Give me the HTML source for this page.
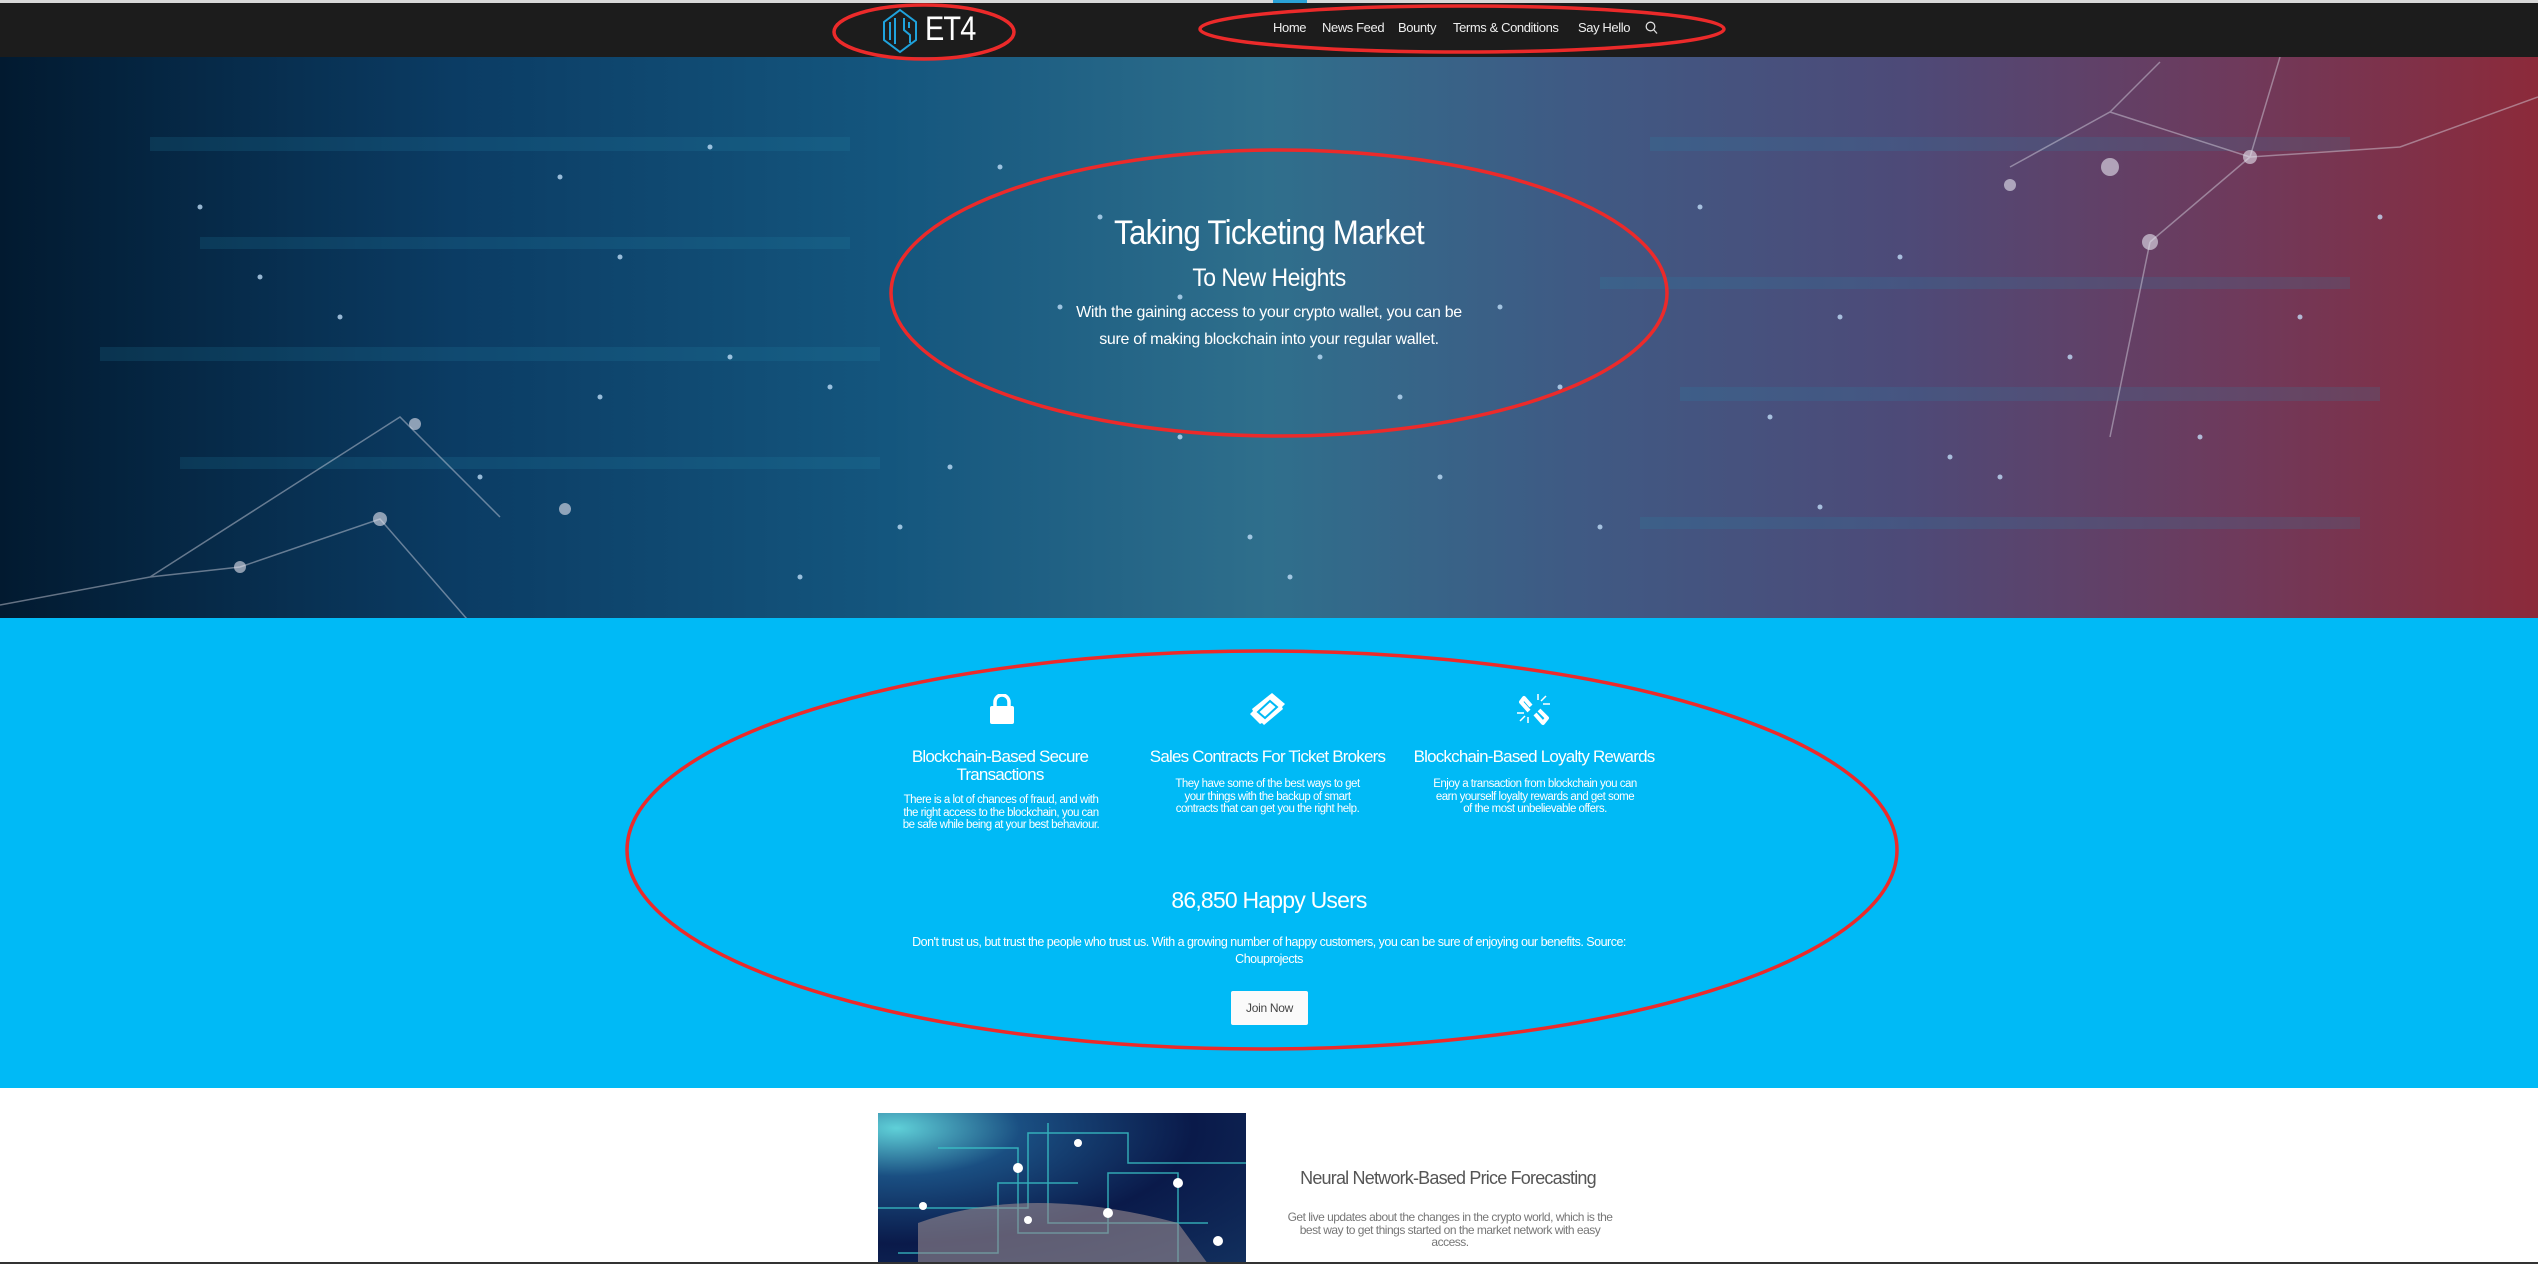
<!DOCTYPE html>
<html><head><meta charset="utf-8"><style>
*{margin:0;padding:0;box-sizing:border-box}
body{width:2538px;height:1264px;overflow:hidden;background:#fff;font-family:"Liberation Sans",sans-serif;position:relative}
.a{position:absolute}
.c{text-align:center}
#nav{left:0;top:0;width:2538px;height:57px;background:#1c1c1c;border-top:3px solid #d8d8d8}
.ni{top:20px;color:#eee;font-size:13px;letter-spacing:-0.4px}
#hero{left:0;top:57px;width:2538px;height:561px;background:linear-gradient(90deg,#021a30 0%,#0b3c64 18%,#14567e 35%,#2f6f8c 50%,#3f5a84 62%,#4d4a78 75%,#6e3a5c 88%,#8c2a3a 100%)}
#blue{left:0;top:618px;width:2538px;height:470px;background:#00baf6}
.t{color:#fff;font-size:17px;letter-spacing:-0.8px;line-height:18px}
.d{color:#fff;font-size:11.5px;line-height:12.5px;letter-spacing:-0.5px;white-space:nowrap}
</style></head><body>
<div id="nav" class="a"></div>
<div class="a" style="left:1273px;top:0;width:34px;height:3px;background:#2aa3d8"></div>
<svg class="a" style="left:880px;top:8px" width="40" height="46" viewBox="0 0 40 46"><path d="M20 2 L36 14 L36 32 L20 44 L4 32 L4 14 Z" fill="none" stroke="#1fa2dc" stroke-width="2"/><path d="M10 14v18M15 10v26M24 10v12l6 5v8M29 14v6" fill="none" stroke="#1fa2dc" stroke-width="2"/></svg>
<div class="a" style="left:925px;top:10px;color:#fff;font-size:34px;letter-spacing:-1px;transform:scaleX(.85);transform-origin:left">ET4</div>
<div class="a ni" style="left:1273px">Home</div>
<div class="a ni" style="left:1322px">News Feed</div>
<div class="a ni" style="left:1398px">Bounty</div>
<div class="a ni" style="left:1453px">Terms &amp; Conditions</div>
<div class="a ni" style="left:1578px">Say Hello</div>
<svg class="a" style="left:1645px;top:21px" width="13" height="14"><circle cx="5.5" cy="5.5" r="4.3" fill="none" stroke="#ddd" stroke-width="1.3"/><path d="M8.5 8.5L12 12.5" stroke="#ddd" stroke-width="1.3"/></svg>

<div id="hero" class="a">
<svg width="2538" height="561" style="position:absolute;left:0;top:0">
<g fill="rgba(40,140,170,.18)">
<rect x="150" y="80" width="700" height="14"/><rect x="200" y="180" width="650" height="12"/><rect x="100" y="290" width="780" height="14"/><rect x="180" y="400" width="700" height="12"/><rect x="1650" y="80" width="700" height="14"/><rect x="1600" y="220" width="750" height="12"/><rect x="1680" y="330" width="700" height="14"/><rect x="1640" y="460" width="720" height="12"/></g>
<g stroke="rgba(220,220,230,.45)" stroke-width="1.5" fill="none">
<path d="M0 548 L150 520 L240 510 L380 462 L500 600 M150 520 L400 360 L500 460 M2010 110 L2110 55 L2250 100 L2400 90 L2538 40 M2110 55 L2160 5 M2250 100 L2280 0 M2150 185 L2110 380 M2250 100 L2150 185"/></g>
<g fill="rgba(230,230,240,.6)"><circle cx="240" cy="510" r="6"/><circle cx="380" cy="462" r="7"/><circle cx="565" cy="452" r="6"/><circle cx="2110" cy="110" r="9"/><circle cx="2250" cy="100" r="7"/><circle cx="2150" cy="185" r="8"/><circle cx="2010" cy="128" r="6"/><circle cx="415" cy="367" r="6"/></g>
<g fill="rgba(200,230,255,.75)">
<circle cx="200" cy="150" r="2.5"/><circle cx="340" cy="260" r="2.5"/><circle cx="620" cy="200" r="2.5"/><circle cx="710" cy="90" r="2.5"/><circle cx="830" cy="330" r="2.5"/><circle cx="1060" cy="250" r="2.5"/><circle cx="1180" cy="380" r="2.5"/><circle cx="1320" cy="300" r="2.5"/><circle cx="1440" cy="420" r="2.5"/><circle cx="1560" cy="330" r="2.5"/><circle cx="1700" cy="150" r="2.5"/><circle cx="1840" cy="260" r="2.5"/><circle cx="1950" cy="400" r="2.5"/><circle cx="2070" cy="300" r="2.5"/><circle cx="2200" cy="380" r="2.5"/><circle cx="480" cy="420" r="2.5"/><circle cx="900" cy="470" r="2.5"/><circle cx="1250" cy="480" r="2.5"/><circle cx="1600" cy="470" r="2.5"/><circle cx="1900" cy="200" r="2.5"/><circle cx="600" cy="340" r="2.5"/><circle cx="1000" cy="110" r="2.5"/>
<circle cx="260" cy="220" r="2.5"/><circle cx="560" cy="120" r="2.5"/><circle cx="730" cy="300" r="2.5"/><circle cx="950" cy="410" r="2.5"/><circle cx="1100" cy="160" r="2.5"/><circle cx="1380" cy="180" r="2.5"/><circle cx="1500" cy="250" r="2.5"/><circle cx="1770" cy="360" r="2.5"/><circle cx="1820" cy="450" r="2.5"/><circle cx="2000" cy="420" r="2.5"/><circle cx="2300" cy="260" r="2.5"/><circle cx="2380" cy="160" r="2.5"/><circle cx="1290" cy="520" r="2.5"/><circle cx="1180" cy="240" r="2.5"/><circle cx="1400" cy="340" r="2.5"/><circle cx="800" cy="520" r="2.5"/>
</g></svg>
</div>
<div class="a c" style="left:969px;top:214px;width:600px;color:#fff;font-size:34px;letter-spacing:-0.8px;transform:scaleX(.92)">Taking Ticketing Market</div>
<div class="a c" style="left:969px;top:264px;width:600px;color:#fff;font-size:25px;letter-spacing:-0.6px;transform:scaleX(.92)">To New Heights</div>
<div class="a c" style="left:969px;top:299px;width:600px;color:#fff;font-size:16px;line-height:27px;letter-spacing:-0.3px">With the gaining access to your crypto wallet, you can be<br>sure of making blockchain into your regular wallet.</div>

<div id="blue" class="a"></div>
<svg class="a" style="left:990px;top:694px" width="24" height="30" viewBox="0 0 24 30"><path d="M5 13V8a7 7 0 0 1 14 0v5" fill="none" stroke="#fff" stroke-width="3.5"/><rect x="0" y="12" width="24" height="18" rx="2" fill="#fff"/></svg>
<svg class="a" style="left:1250px;top:692px" width="36" height="34" viewBox="0 0 36 34"><path d="M22 1 L35 12 L32 15 L33 17 L14 33 L12 31 L10 32 L0 22 L3 19 L2 17 Z" fill="#fff"/><path d="M20 9 L27 15 L15 26 L8 20 Z" fill="none" stroke="#00baf6" stroke-width="2"/></svg>
<svg class="a" style="left:1517px;top:692px" width="36" height="34" viewBox="0 0 36 34" fill="none" stroke="#fff"><path d="M14 14 L7 6 L4 10 L12 19" stroke-width="4" stroke-linejoin="round"/><path d="M22 18 L30 26 L26 31 L18 22" stroke-width="4" stroke-linejoin="round"/><path d="M21 2v6M24 9l5-5M26 12h7M11 31v-6M8 24l-5 5M7 21H0" stroke-width="1.5"/></svg>
<div class="a c t" style="left:880px;top:748px;width:240px">Blockchain-Based Secure<br>Transactions</div>
<div class="a c d" style="left:881px;top:794px;width:240px">There is a lot of chances of fraud, and with<br>the right access to the blockchain, you can<br>be safe while being at your best behaviour.</div>
<div class="a c t" style="left:1140px;top:748px;width:255px">Sales Contracts For Ticket Brokers</div>
<div class="a c d" style="left:1150px;top:778px;width:235px">They have some of the best ways to get<br>your things with the backup of smart<br>contracts that can get you the right help.</div>
<div class="a c t" style="left:1404px;top:748px;width:260px">Blockchain-Based Loyalty Rewards</div>
<div class="a c d" style="left:1410px;top:778px;width:250px">Enjoy a transaction from blockchain you can<br>earn yourself loyalty rewards and get some<br>of the most unbelievable offers.</div>
<div class="a c" style="left:969px;top:887px;width:600px;color:#fff;font-size:23px;letter-spacing:-0.8px">86,850 Happy Users</div>
<div class="a c" style="left:869px;top:934px;width:800px;color:#fff;font-size:12.5px;line-height:17px;letter-spacing:-0.5px">Don't trust us, but trust the people who trust us. With a growing number of happy customers, you can be sure of enjoying our benefits. Source:<br>Chouprojects</div>
<div class="a c" style="left:1231px;top:991px;width:77px;height:34px;background:#fafafa;border-radius:2px;color:#444;font-size:12px;line-height:34px;letter-spacing:-0.3px">Join Now</div>

<div class="a" style="left:878px;top:1113px;width:368px;height:151px;background:radial-gradient(ellipse at 5% 10%,#5fd0d8 0%,#1a4f82 25%,#0a1a4a 60%,#12305e 100%)">
<svg width="368" height="151"><g stroke="#3bc7c9" stroke-width="1.5" fill="none" opacity=".8"><path d="M0 95H150V20H250V50H368M60 35H140V120H230V60H300V150M20 140H120V70H200M170 10V110H330"/></g><path d="M40 110 Q150 70 300 110 L330 151 L40 151Z" fill="#9a8a90" opacity=".6"/><g fill="#fff"><circle cx="140" cy="55" r="5"/><circle cx="230" cy="100" r="5"/><circle cx="300" cy="70" r="5"/><circle cx="200" cy="30" r="4"/><circle cx="45" cy="93" r="4"/><circle cx="340" cy="128" r="5"/><circle cx="150" cy="107" r="4"/></g></svg>
</div>
<div class="a c" style="left:1248px;top:1168px;width:400px;color:#555;font-size:18px;letter-spacing:-0.8px">Neural Network-Based Price Forecasting</div>
<div class="a c" style="left:1240px;top:1211px;width:420px;color:#777;font-size:12px;line-height:12.5px;letter-spacing:-0.5px">Get live updates about the changes in the crypto world, which is the<br>best way to get things started on the market network with easy<br>access.</div>
<div class="a" style="left:0;top:1262px;width:2538px;height:2px;background:#333"></div>

<svg class="a" style="left:0;top:0" width="2538" height="1264" fill="none" stroke="#ec2a2a" stroke-width="3.5">
<ellipse cx="924" cy="32" rx="90" ry="27"/>
<ellipse cx="1462" cy="29" rx="262" ry="23"/>
<ellipse cx="1279" cy="293" rx="388" ry="143"/>
<ellipse cx="1262" cy="850" rx="635" ry="199"/>
</svg>
</body></html>
